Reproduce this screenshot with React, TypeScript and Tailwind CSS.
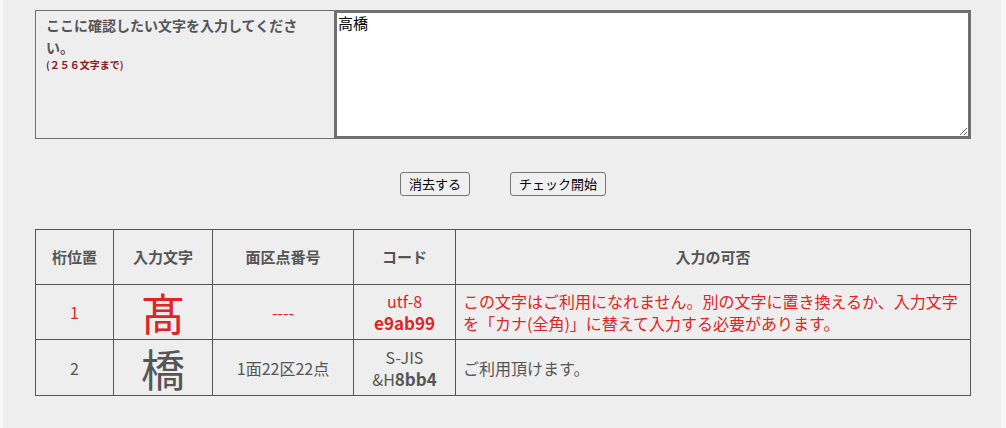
const jp = { fontFamily: '"Noto Sans CJK JP", "Noto Sans", sans-serif' };

export default function App() {
  return (
    <div className="min-h-screen bg-[#f7f7f7] pl-[3px] pr-[5px]" style={jp}>
      <div className="min-h-[428px] bg-[#eeeeee] pl-[32px] pr-[30px] pt-[10px] text-[#555555]">
        {/* 入力欄 */}
        <table className="w-full border-collapse">
          <tbody>
            <tr className="h-[128px]">
              <td className="w-[299px] border border-[#707070] px-[10px] pt-[3px] align-top">
                <p className="text-[14px] font-bold leading-[22px] text-[#555555]">
                  ここに確認したい文字を入力してください。
                </p>
                <p className="text-[10px] font-bold leading-[14px] text-[#8b1a1a]">
                  (２５６文字まで)
                </p>
              </td>
              <td className="border border-[#707070] p-0 align-top">
                <textarea
                  defaultValue="高橋"
                  className="block h-[127px] w-full resize-y border-2 border-solid border-[#707070] bg-white px-[1px] py-0 text-[15px] leading-[20px] text-black outline-none"
                  style={jp}
                />
              </td>
            </tr>
          </tbody>
        </table>

        {/* ボタン */}
        <div className="mt-[33px] flex justify-center gap-[40px]">
          <button className="h-[24px] rounded-[3px] border border-[#767676] bg-[#efefef] px-[8px] text-[13px] text-black">
            消去する
          </button>
          <button className="h-[24px] rounded-[3px] border border-[#767676] bg-[#efefef] px-[8px] text-[13px] text-black">
            チェック開始
          </button>
        </div>

        {/* 結果 */}
        <table className="mt-[33px] w-full border-collapse text-[16px]">
          <thead>
            <tr className="h-[55px] text-[15px] font-bold">
              <th className="w-[78px] border border-[#555555]">桁位置</th>
              <th className="w-[99px] border border-[#555555]">入力文字</th>
              <th className="w-[141px] border border-[#555555]">面区点番号</th>
              <th className="w-[102px] border border-[#555555]">コード</th>
              <th className="border border-[#555555]">入力の可否</th>
            </tr>
          </thead>
          <tbody>
            <tr className="h-[55px] text-[#e02424]">
              <td className="border border-[#555555] text-center">1</td>
              <td className="border border-[#555555] text-center text-[44px] leading-[44px]">髙</td>
              <td className="border border-[#555555] text-center">----</td>
              <td className="border border-[#555555] text-center">
                <div className="leading-[22px]">utf-8</div>
                <div className="text-[17px] font-bold leading-[22px]">e9ab99</div>
              </td>
              <td className="border border-[#555555] px-[7px] leading-[22px]">
                この文字はご利用になれません。別の文字に置き換えるか、入力文字を「カナ(全角)」に替えて入力する必要があります。
              </td>
            </tr>
            <tr className="h-[56px]">
              <td className="border border-[#555555] text-center">2</td>
              <td className="border border-[#555555] text-center text-[44px] leading-[44px]">橋</td>
              <td className="border border-[#555555] text-center">1面22区22点</td>
              <td className="border border-[#555555] text-center">
                <div className="leading-[22px]">S-JIS</div>
                <div className="leading-[22px]">
                  &amp;H<b className="text-[17px]">8bb4</b>
                </div>
              </td>
              <td className="border border-[#555555] px-[7px]">ご利用頂けます。</td>
            </tr>
          </tbody>
        </table>
      </div>
    </div>
  );
}
